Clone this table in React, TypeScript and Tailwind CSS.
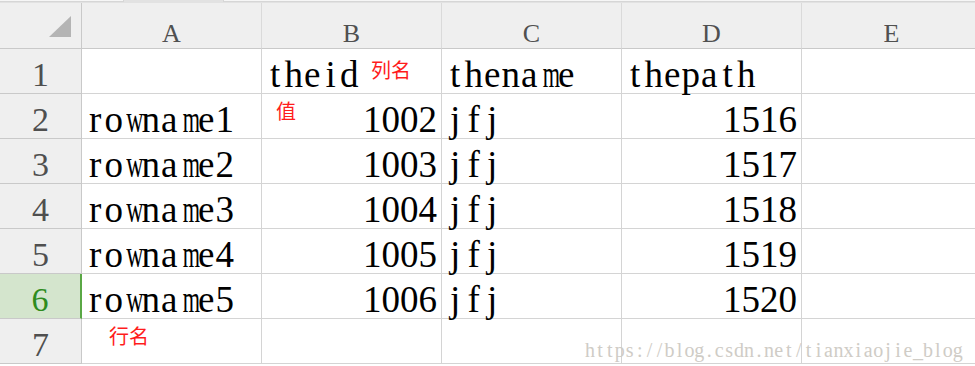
import React from 'react';

const cols = ['A', 'B', 'C', 'D', 'E'];

type Cell = { text: string; align?: 'left' | 'right' };

const rows: Cell[][] = [
    [{ text: '' }, { text: 'theid' }, { text: 'thename' }, { text: 'thepath' }, { text: '' }],
    [{ text: 'rowname1' }, { text: '1002', align: 'right' }, { text: 'jfj' }, { text: '1516', align: 'right' }, { text: '' }],
    [{ text: 'rowname2' }, { text: '1003', align: 'right' }, { text: 'jfj' }, { text: '1517', align: 'right' }, { text: '' }],
    [{ text: 'rowname3' }, { text: '1004', align: 'right' }, { text: 'jfj' }, { text: '1518', align: 'right' }, { text: '' }],
    [{ text: 'rowname4' }, { text: '1005', align: 'right' }, { text: 'jfj' }, { text: '1519', align: 'right' }, { text: '' }],
    [{ text: 'rowname5' }, { text: '1006', align: 'right' }, { text: 'jfj' }, { text: '1520', align: 'right' }, { text: '' }],
    [{ text: '' }, { text: '' }, { text: '' }, { text: '' }, { text: '' }],
];

// half-width glyphs of the sheet font all take the same advance; wide letters get squeezed
const glyphClass = (c: string, small?: boolean) => {
    const base = small ? 'inline-block w-[9.95px] text-center' : 'inline-block w-[18.5px] text-center';
    if (c === 'm') return base + ' scale-x-[0.6]';
    if (c === 'w') return base + ' scale-x-[0.64]';
    return base;
};

const Mono: React.FC<{ text: string; small?: boolean }> = ({ text, small }) => (
    <span className="whitespace-nowrap leading-none">
        {text.split('').map((c, i) => (
            <span key={i} className={glyphClass(c, small)}>
                {c}
            </span>
        ))}
    </span>
);

const App: React.FC = () => {
    return (
        <div className="relative w-[975px] h-[366px] overflow-hidden bg-white font-[Liberation_Serif,serif]">
            <div className="flex h-[3px] bg-[#e2e2e2]">
                <div className="w-[124px] h-[2px] bg-[#f6f6f6] border-b border-r border-[#d6d6d6]" />
                <div className="w-[99px]" />
                <div className="flex-1 h-[2px] bg-[#f6f6f6] border-b border-l border-[#d6d6d6]" />
            </div>

            <div className="grid grid-cols-[82px_180px_180px_180px_180px_180px] w-[982px]">
                <div className="relative h-[46px] bg-[#efefef] border-r border-b border-[#c9c9c9]">
                    <svg className="absolute left-0 top-0" width="82" height="46" viewBox="0 0 82 46">
                        <polygon points="71,13 71,34 49,34" fill="#b4b4b4" />
                    </svg>
                </div>
                {cols.map((c) => (
                    <div
                        key={c}
                        className="h-[46px] bg-[#efefef] border-r border-b border-r-[#dadada] border-b-[#c9c9c9] flex items-end justify-center pb-[1px] text-[26px] leading-none text-[#505050]"
                    >
                        {c}
                    </div>
                ))}

                {rows.map((row, r) => (
                    <React.Fragment key={r}>
                        <div
                            className={
                                r === 5
                                    ? 'h-[45px] bg-[#d4e5cd] border-r-2 border-r-[#5aa845] border-b border-b-[#c9c9c9] flex items-end justify-center pb-[1px] text-[34px] leading-none text-[#2f8c1e]'
                                    : 'h-[45px] bg-[#efefef] border-r border-b border-[#c9c9c9] flex items-end justify-center pb-[1px] text-[34px] leading-none text-[#4f4f4f]'
                            }
                        >
                            {r + 1}
                        </div>
                        {row.map((cell, c) => (
                            <div
                                key={c}
                                className={
                                    cell.align === 'right'
                                        ? 'h-[45px] border-r border-b border-[#d4d4d4] flex items-end justify-end pr-[4px] text-[37px] text-black'
                                        : 'h-[45px] border-r border-b border-[#d4d4d4] flex items-end justify-start pl-[4px] text-[37px] text-black'
                                }
                            >
                                {cell.text && <Mono text={cell.text} />}
                            </div>
                        ))}
                    </React.Fragment>
                ))}
            </div>

            {/* red notes pasted on the sheet */}
            <span className="absolute left-[371px] top-[60px] text-[20px] leading-none text-[#ff1c1c] font-[Noto_Sans_CJK_SC,sans-serif]">列名</span>
            <span className="absolute left-[276px] top-[101px] text-[20px] leading-none text-[#ff1c1c] font-[Noto_Sans_CJK_SC,sans-serif]">值</span>
            <span className="absolute left-[109px] top-[326px] text-[20px] leading-none text-[#ff1c1c] font-[Noto_Sans_CJK_SC,sans-serif]">行名</span>

            <span className="absolute left-[585px] top-[335px] text-[20px] text-[#cfccc6]">
                <Mono text="https://blog.csdn.net/tianxiaojie_blog" small />
            </span>
        </div>
    );
};

export default App;
